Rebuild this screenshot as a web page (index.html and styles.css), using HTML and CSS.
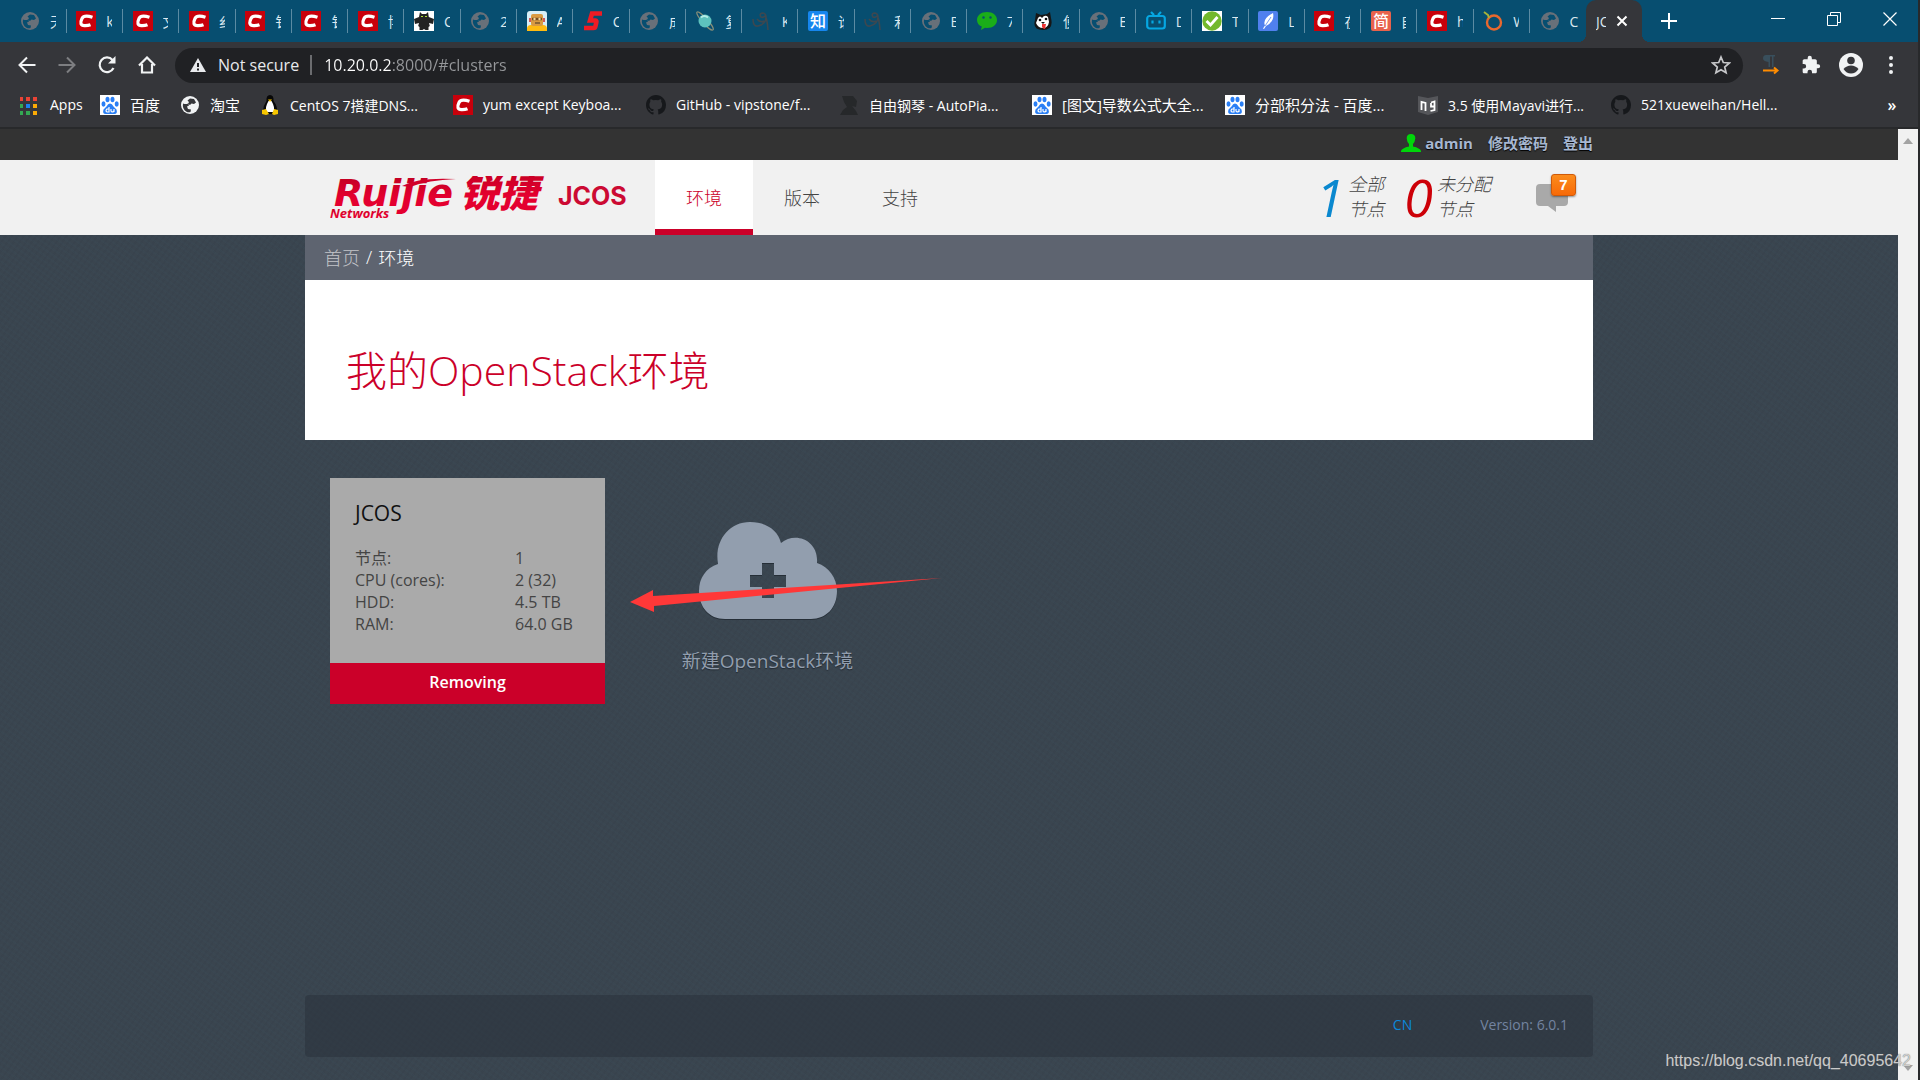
FILE: index.html
```html
<!DOCTYPE html>
<html lang="zh-CN">
<head>
<meta charset="utf-8">
<title>JCOS</title>
<link rel="stylesheet" href="styles.css">
</head>
<body>
<svg class="defs" aria-hidden="true">
  <symbol id="globe" viewBox="0 0 20 20"><circle cx="10" cy="10" r="9" fill="currentColor"/><path class="land" d="M3 8.500q3 1 5 0l1 2-2 1 1 2.500 3 .5-.5 2.500q-2 .8-4-.2-4.500-2.500-3.500-8.300zM10 3.500l4 .5 2 3.500-2 1.500-2.500-.5-1.500 1.500-2-1 1-2-1.500-1.500z"/></symbol>
  <symbol id="csdn" viewBox="0 0 20 20"><path fill="#c8000b" d="M0 0h20v20H0z"/><path d="M16.500 6.300Q8 3.500 6 7.500 2.700 14.500 8.500 14.600q3.500.1 6-.9" fill="none" stroke="#fff" stroke-width="3.200"/></symbol>
  <symbol id="dragon" viewBox="0 0 20 20"><path fill="#fff" d="M0 0h20v20H0z"/><path fill="#222" d="M6 1l2 2h4l2-2 .8 5L20 8l-1 5-4-1 .8 3-1.300 1v3h-3l-1.500-1-1.500 1h-3v-3l-1.300-1L5 12l-4 1-1-5 5-2z"/><path fill="#ad3" d="M7 5h2v1H7zM11 5h2v1h-2z"/></symbol>
  <symbol id="robot" viewBox="0 0 20 20"><rect width="20" height="20" rx="3" fill="#d8eef6"/><path fill="#fb1" d="M0 20v-2q0-4 4-4h12q4 0 4 4v2z"/><rect x="4" y="3" width="12" height="12" rx="2" fill="#d99a42"/><path d="M5 8h10" stroke="#754c22" stroke-width="2.500"/><circle cx="7.500" cy="8" r="1.200" fill="#f3d9a0"/><circle cx="12.500" cy="8" r="1.200" fill="#f3d9a0"/><path d="M3 7v4M17 7v4" stroke="#c33" stroke-width="1.600"/><path d="M8 12h5" stroke="#432"/></symbol>
  <symbol id="five" viewBox="0 0 20 20"><path d="M19 2.500H9L7 9.500h5.500q1.300 0 .8 2l-.8 3.500q-.4 2-2 2H1" fill="none" stroke="#ee1c24" stroke-width="4.600"/></symbol>
  <symbol id="planet" viewBox="0 0 20 20"><ellipse cx="10" cy="10" rx="12" ry="2.600" transform="rotate(48 10 10)" fill="none" stroke="#8a8f78" stroke-width="1.200"/><circle cx="10" cy="10" r="6.500" fill="#5ec2bd"/><path d="M6 6.500q3-3 7 0" stroke="#b5ece6" stroke-width="2" fill="none"/></symbol>
  <symbol id="scribble" viewBox="0 0 20 20"><path d="M1 8q0 8 5 7 8-2 8-9 0-4-4-4-3 1-1 4 2 1 4-1 2 1 3 14M5 8q3 4 7 2" fill="none" stroke="#3d4850" stroke-width="1.600"/></symbol>
  <symbol id="zhihu" viewBox="0 0 20 20"><rect width="20" height="20" rx="2" fill="#1686ee"/><text x="10" y="16" text-anchor="middle" class="glyph">知</text></symbol>
  <symbol id="wechat" viewBox="0 0 20 20"><path fill="#1aad19" d="M10 1c6 0 10 3.500 10 8s-4 8-10 8l-2-.2L4 19l.8-3.400Q0 13.500 0 9c0-4.500 4-8 10-8z"/><circle cx="6.500" cy="6.500" r="1.200" fill="#074e70"/><circle cx="13.500" cy="6.500" r="1.200" fill="#074e70"/></symbol>
  <symbol id="husky" viewBox="0 0 20 20"><path fill="#161616" d="M3 2l5 2 6-1 3-2 1 6q3 12-8 12T2 9z"/><path fill="#fff" d="M5 7q2-3 4 0 3-4 6-1l1 5q-1 6-6 6-5 0-7-5z"/><circle cx="7" cy="9" r="1.300" fill="#111"/><circle cx="13" cy="8" r="1.300" fill="#111"/><path fill="#111" d="M8 11h4l-2 2z"/><path fill="#e33" d="M9 13h4l-1 5q-2 0-3-2z"/></symbol>
  <symbol id="bili" viewBox="0 0 20 20"><rect x="1.200" y="5" width="17.600" height="12.500" rx="2.500" fill="none" stroke="#06a7e2" stroke-width="2.200"/><path d="M5 1l3 3M15 1l-3 3M6.500 9.500v3M13.500 9.500v3" stroke="#06a7e2" stroke-width="2.200"/></symbol>
  <symbol id="check" viewBox="0 0 20 20"><path fill="#fff" d="M0 0h20v20H0z"/><circle cx="10" cy="10" r="9.700" fill="#72b82c"/><path d="M4.500 10l4 4 7-8" fill="none" stroke="#fff" stroke-width="2.800"/></symbol>
  <symbol id="feather" viewBox="0 0 20 20"><rect width="20" height="20" rx="2" fill="#5080ee"/><path fill="#fff" d="M15 2q2 8-7 13l-2 3-1-.5 2-3Q4 8 15 2z"/><path d="M7 15l6-9" stroke="#5080ee" stroke-width=".8"/></symbol>
  <symbol id="jian" viewBox="0 0 20 20"><rect width="20" height="20" rx="2" fill="#e8624c"/><text x="10" y="16" text-anchor="middle" class="glyph">简</text></symbol>
  <symbol id="orange" viewBox="0 0 20 20"><circle cx="11" cy="11.500" r="7" fill="none" stroke="#e8682e" stroke-width="2.400"/><path d="M1 1l4 3 1 3" fill="none" stroke="#a5b33a" stroke-width="2"/></symbol>
  <symbol id="baidu" viewBox="0 0 20 20"><path fill="#fff" d="M0 0h20v20H0z"/><g fill="#2a7ff5"><ellipse cx="3.500" cy="9" rx="2" ry="2.700"/><ellipse cx="7.500" cy="4.500" rx="2" ry="2.800"/><ellipse cx="12.500" cy="4.500" rx="2" ry="2.800"/><ellipse cx="16.700" cy="9" rx="2" ry="2.700"/><path d="M10 8.500q2 0 3.500 3l3 3q1.500 5-3 4.500h-7q-4.500.5-3-4.500l3-3Q8 8.500 10 8.500z"/></g><path d="M9 12v5H7q-2-1 0-3h2M11 14v2q1 2 3 0v-2 3" fill="none" stroke="#fff" stroke-width="1.200"/></symbol>
  <symbol id="tux" viewBox="0 0 20 20"><path fill="#080808" d="M10 0q4 0 3.500 6 4 5 3.500 10l-3 3H6l-3-3q0-5 3.500-10Q6 0 10 0z"/><path fill="#fff" d="M8.500 6h3q4 7 2 11h-7q-2-4 2-11z"/><path fill="#f7c600" d="M2 15l4-1 3 5-3 1-4-1zM18 15l-4-1-2 5 2 1 4-1zM8 4.500h4L10 7z"/></symbol>
  <symbol id="github" viewBox="0 0 16 16"><path fill="#16181b" d="M8 0C3.580 0 0 3.580 0 8c0 3.540 2.290 6.530 5.470 7.590.4.070.55-.17.55-.38v-1.490c-2.010.37-2.530-.49-2.690-.94-.36-.92-1.200-1.300-1.510-1.480-.6-.5 0-.5.300-.45.750.1 1.200.900 1.400 1.150.72 1.210 1.870.87 2.330.66.070-.52.280-.87.510-1.070-1.780-.2-3.640-.89-3.640-3.950 0-.87.310-1.590.82-2.150-.08-.2-.36-1.020.08-2.120 0 0 .67-.21 2.200.82a7.600 7.600 0 0 1 4 0c1.530-1.040 2.200-.82 2.200-.82.44 1.100.16 1.920.08 2.120.51.56.82 1.270.82 2.150 0 3.070-1.870 3.750-3.650 3.950.29.250.54.730.54 1.480v2.190c0 .21.150.46.550.38A8 8 0 0 0 16 8c0-4.420-3.580-8-8-8z"/></symbol>
  <symbol id="piano" viewBox="0 0 20 20"><path fill="#26282a" d="M3 1h11l4 5-1 6-4-1 4 5 2 4H1l3-5 4-3-3-5z"/></symbol>
  <symbol id="book" viewBox="0 0 20 20"><path fill="#55565a" d="M0 1l10 2 10-2v16l-10 3L0 17z"/><path d="M3.500 15V7l4 1v8M13 8v3.500h3.500V6.500L13 7.500M16.500 11v4l-4 1" fill="none" stroke="#fff" stroke-width="1.800"/></symbol>
</svg>

<header class="browser">
  <div class="tabstrip">
    <nav class="tabs" aria-label="Tabs">
      <a class="tab" href="#"><svg class="fav dim"><use href="#globe"/></svg><span>天</span></a>
      <a class="tab" href="#"><svg class="fav"><use href="#csdn"/></svg><span>k</span></a>
      <a class="tab" href="#"><svg class="fav"><use href="#csdn"/></svg><span>文</span></a>
      <a class="tab" href="#"><svg class="fav"><use href="#csdn"/></svg><span>纟</span></a>
      <a class="tab" href="#"><svg class="fav"><use href="#csdn"/></svg><span>钅</span></a>
      <a class="tab" href="#"><svg class="fav"><use href="#csdn"/></svg><span>钅</span></a>
      <a class="tab" href="#"><svg class="fav"><use href="#csdn"/></svg><span>博</span></a>
      <a class="tab" href="#"><svg class="fav"><use href="#dragon"/></svg><span>C</span></a>
      <a class="tab" href="#"><svg class="fav dim"><use href="#globe"/></svg><span>2</span></a>
      <a class="tab" href="#"><svg class="fav"><use href="#robot"/></svg><span>A</span></a>
      <a class="tab" href="#"><svg class="fav"><use href="#five"/></svg><span>C</span></a>
      <a class="tab" href="#"><svg class="fav dim"><use href="#globe"/></svg><span>成</span></a>
      <a class="tab" href="#"><svg class="fav"><use href="#planet"/></svg><span>复</span></a>
      <a class="tab" href="#"><svg class="fav"><use href="#scribble"/></svg><span>K</span></a>
      <a class="tab" href="#"><svg class="fav"><use href="#zhihu"/></svg><span>谁</span></a>
      <a class="tab" href="#"><svg class="fav"><use href="#scribble"/></svg><span>利</span></a>
      <a class="tab" href="#"><svg class="fav dim"><use href="#globe"/></svg><span>B</span></a>
      <a class="tab" href="#"><svg class="fav"><use href="#wechat"/></svg><span>7</span></a>
      <a class="tab" href="#"><svg class="fav"><use href="#husky"/></svg><span>使</span></a>
      <a class="tab" href="#"><svg class="fav dim"><use href="#globe"/></svg><span>E</span></a>
      <a class="tab" href="#"><svg class="fav"><use href="#bili"/></svg><span>D</span></a>
      <a class="tab" href="#"><svg class="fav"><use href="#check"/></svg><span>T</span></a>
      <a class="tab" href="#"><svg class="fav"><use href="#feather"/></svg><span>L</span></a>
      <a class="tab" href="#"><svg class="fav"><use href="#csdn"/></svg><span>在</span></a>
      <a class="tab" href="#"><svg class="fav"><use href="#jian"/></svg><span>自</span></a>
      <a class="tab" href="#"><svg class="fav"><use href="#csdn"/></svg><span>h</span></a>
      <a class="tab" href="#"><svg class="fav"><use href="#orange"/></svg><span>W</span></a>
      <a class="tab last" href="#"><svg class="fav dim"><use href="#globe"/></svg><span>C</span></a>
      <a class="tab current" href="#clusters" aria-current="page"><span>JC</span><svg class="x" viewBox="0 0 12 12"><path d="M1.500 1.500l9 9M10.500 1.500l-9 9" stroke="#fff" stroke-width="2"/></svg></a>
    </nav>
    <button class="newtab" aria-label="New tab"><svg width="16" height="16" viewBox="0 0 16 16"><path d="M8 0v16M0 8h16" stroke="#fff" stroke-width="2"/></svg></button>
    <div class="window-controls">
      <button aria-label="Minimize"><svg width="14" height="14" viewBox="0 0 14 14"><path d="M0 6.500h14" stroke="#fff"/></svg></button>
      <button aria-label="Restore"><svg width="14" height="14" viewBox="0 0 14 14"><path d="M.5 3.500h10v10H.5zM3.500 3V.5h10v10H11" fill="none" stroke="#fff"/></svg></button>
      <button aria-label="Close"><svg width="14" height="14" viewBox="0 0 14 14"><path d="M.5.5l13 13M13.500.5l-13 13" stroke="#fff" stroke-width="1.200"/></svg></button>
    </div>
  </div>

  <div class="toolbar">
    <button aria-label="Back"><svg width="18" height="18" viewBox="0 0 18 18"><path d="M17.500 9H2M9 1.500L1.500 9 9 16.500" fill="none" stroke="#f1f3f4" stroke-width="2"/></svg></button>
    <button aria-label="Forward"><svg width="18" height="18" viewBox="0 0 18 18"><path d="M.5 9H16M9 1.500L16.500 9 9 16.500" fill="none" stroke="#7d7e81" stroke-width="2"/></svg></button>
    <button aria-label="Reload"><svg width="18" height="18" viewBox="0 0 18 18"><path d="M15.500 12A7.300 7.300 0 1 1 14.500 4L16 6" fill="none" stroke="#f1f3f4" stroke-width="2.200"/><path d="M17.500 0v7.500H10z" fill="#f1f3f4"/></svg></button>
    <button aria-label="Home"><svg width="18" height="18" viewBox="0 0 18 18"><path d="M1 9.500L9 1.500l8 8M4 8v8.500h10V8" fill="none" stroke="#f1f3f4" stroke-width="2.200"/></svg></button>
    <div class="omnibox">
      <svg width="16" height="14" viewBox="0 0 16 14"><path d="M8 0l8 14H0z" fill="#e8eaed"/><path d="M8 5v4M8 10.500v2" stroke="#202124" stroke-width="2"/></svg>
      <label for="address">Not secure</label>
      <input id="address" type="text" value="10.20.0.2:8000/#clusters">
      <button class="star" aria-label="Bookmark this page"><svg width="20" height="20" viewBox="0 0 20 20"><path d="M10 2l2.300 5.500 6 .5-4.600 4 1.400 5.800L10 14.700l-5.100 3.100L6.300 12 1.700 8l6-.5z" fill="none" stroke="#c6c7c9" stroke-width="1.700"/></svg></button>
    </div>
    <button aria-label="Text direction"><svg width="18" height="20" viewBox="0 0 18 20"><path d="M4 0h9v1.500h-1.500V12H10V1.500H8V12H6.500V7Q1 6 1 3.500 1 0 4 0z" fill="#394f5c"/><path d="M1 15.500h14M12 12.500l3.500 3-3.500 3" fill="none" stroke="#ff8c00" stroke-width="2"/></svg></button>
    <button aria-label="Extensions"><svg width="20" height="20" viewBox="0 0 24 24"><path fill="#f1f3f4" d="M20.500 11H19V7c0-1.100-.9-2-2-2h-4V3.500a2.500 2.500 0 0 0-5 0V5H4c-1.100 0-2 .9-2 2v3.800h1.500a2.700 2.700 0 0 1 0 5.400H2V20c0 1.100.9 2 2 2h3.800v-1.500a2.700 2.700 0 0 1 5.400 0V22H17c1.100 0 2-.9 2-2v-4h1.500a2.500 2.500 0 0 0 0-5z"/></svg></button>
    <button aria-label="Profile"><svg width="24" height="24" viewBox="0 0 24 24"><circle cx="12" cy="12" r="12" fill="#f1f3f4"/><circle cx="12" cy="7.500" r="3.800" fill="#35363a"/><path d="M4.500 16q3-3.500 7.500-3.500t7.500 3.500q-3 4.500-7.500 4.500T4.500 16z" fill="#35363a"/></svg></button>
    <button aria-label="Menu"><svg width="6" height="18" viewBox="0 0 6 18"><path fill="#f1f3f4" d="M3 0a2 2 0 1 1 0 4 2 2 0 0 1 0-4zm0 7a2 2 0 1 1 0 4 2 2 0 0 1 0-4zm0 7a2 2 0 1 1 0 4 2 2 0 0 1 0-4z"/></svg></button>
  </div>

  <nav class="bookmarks" aria-label="Bookmarks">
    <a class="mark short" href="#"><svg class="fav apps" viewBox="1 0 20 20"><path fill="#ea4335" d="M0 2h4v4H0zM7 2h4v4H7zM14 2h4v4h-4z"/><path fill="#34a853" d="M0 9h4v4H0zM0 16h4v4H0zM7 16h4v4H7z"/><path fill="#1a82f0" d="M7 9h4v4H7z"/><path fill="#fbaa05" d="M14 9h4v4h-4zM14 16h4v4h-4z"/></svg>Apps</a>
    <a class="mark short cjk" href="#"><svg class="fav"><use href="#baidu"/></svg>百度</a>
    <a class="mark short cjk" href="#"><svg class="fav bright"><use href="#globe"/></svg>淘宝</a>
    <a class="mark" href="#"><svg class="fav"><use href="#tux"/></svg>CentOS 7搭建DNS...</a>
    <a class="mark" href="#"><svg class="fav"><use href="#csdn"/></svg>yum except Keyboa...</a>
    <a class="mark" href="#"><svg class="fav"><use href="#github"/></svg>GitHub - vipstone/f...</a>
    <a class="mark" href="#"><svg class="fav"><use href="#piano"/></svg>自由钢琴 - AutoPia...</a>
    <a class="mark cjk" href="#"><svg class="fav"><use href="#baidu"/></svg>[图文]导数公式大全...</a>
    <a class="mark cjk" href="#"><svg class="fav"><use href="#baidu"/></svg>分部积分法 - 百度...</a>
    <a class="mark" href="#"><svg class="fav"><use href="#book"/></svg>3.5 使用Mayavi进行...</a>
    <a class="mark" href="#"><svg class="fav"><use href="#github"/></svg>521xueweihan/Hell...</a>
    <button class="more" aria-label="More bookmarks">»</button>
  </nav>
</header>

<div class="viewport">
  <div class="page">
    <div class="userbar">
      <div class="container user-links">
        <svg width="20" height="19" viewBox="0 0 20 19"><path d="M10 0q4.500 0 4.300 4.500Q14 8 12 10v2.500q7 1.500 8 4.500v1H0v-1q1-3 8-4.500V10Q6 8 5.700 4.500 5.500 0 10 0z" fill="#00d60a"/></svg>
        <span class="username">admin</span>
        <a href="#password">修改密码</a>
        <a href="#logout">登出</a>
      </div>
    </div>

    <div class="navbar">
      <div class="container navbar-row">
        <a class="logo" href="#" aria-label="Ruijie Networks JCOS">
          <svg width="310" height="46" viewBox="0 0 310 46">
            <defs><linearGradient id="brand" x1="0" x2="0" y1="0" y2="1"><stop offset="0" stop-color="#b8001f"/><stop offset=".6" stop-color="#e4002f"/></linearGradient></defs>
            <text class="logo-name" x="4" y="30">Ruijie</text>
            <path d="M72 10Q88 1 126 3 98 4 80 11z" fill="#d10029"/>
            <text class="logo-sub" x="0" y="42">Networks</text>
            <text class="logo-cn" x="130" y="31">锐捷</text>
            <text class="logo-product" x="228" y="29">JCOS</text>
          </svg>
        </a>
        <nav class="menu">
          <a class="active" href="#clusters">环境</a>
          <a href="#releases">版本</a>
          <a href="#support">支持</a>
        </nav>
        <div class="stats">
          <div class="stat"><span class="count total">1</span><span class="stat-label">全部<br>节点</span></div>
          <div class="stat"><span class="count free">0</span><span class="stat-label">未分配<br>节点</span></div>
        </div>
        <button class="notifications" aria-label="Notifications">
          <svg width="32" height="28" viewBox="0 0 32 28"><path d="M4 0h24q4 0 4 4v14q0 4-4 4h-8v6l-8-6H4q-4 0-4-4V4q0-4 4-4z" fill="#a9a9a9"/></svg>
          <span class="badge">7</span>
        </button>
      </div>
    </div>

    <main class="container main">
      <nav class="breadcrumb"><a href="#">首页</a><span>/</span><span>环境</span></nav>
      <div class="title-box"><h1>我的OpenStack环境</h1></div>
      <div class="clusters">
        <article class="cluster">
          <div class="cluster-body">
            <h2>JCOS</h2>
            <table>
              <tr><th scope="row">节点:</th><td>1</td></tr>
              <tr><th scope="row">CPU (cores):</th><td>2 (32)</td></tr>
              <tr><th scope="row">HDD:</th><td>4.5 TB</td></tr>
              <tr><th scope="row">RAM:</th><td>64.0 GB</td></tr>
            </table>
          </div>
          <div class="cluster-status">Removing</div>
        </article>
        <div class="create">
          <button class="create-button">
            <svg width="138" height="98" viewBox="0 0 138 98"><path fill="#929eae" fill-rule="evenodd" d="M19 42C15 20 29 0 51 0c16 0 28 8 31 21 14-12 38-3 36 20 12 4 20 15 20 28 0 17-11 28-26 28H26C10 97 0 85 0 69 0 56 7 46 19 42zM63 41v12H51v12h12v11h12V65h12V53H75V41z"/></svg>
            <span>新建OpenStack环境</span>
          </button>
          <svg class="pointer" width="312" height="36" viewBox="0 0 312 36" aria-hidden="true"><path d="M0 24L23 12v6L312 0 24 28v6z" fill="#ff3838"/></svg>
        </div>
      </div>
    </main>

    <footer class="container footer">
      <a href="#language">CN</a>
      <span>Version: 6.0.1</span>
    </footer>
  </div>
  <div class="scrollbar" aria-hidden="true">
    <svg width="10" height="6" viewBox="0 0 10 6"><path d="M5 0l5 6H0z" fill="#a3a3a3"/></svg>
    <svg width="10" height="6" viewBox="0 0 10 6"><path d="M0 0h10L5 6z" fill="#a3a3a3"/></svg>
  </div>
</div>
<div class="watermark">https://blog.csdn.net/qq_40695642</div>
</body>
</html>
```
FILE: styles.css
```css
* { box-sizing: border-box; }

body {
  margin: 0;
  min-height: 100vh;
  display: flex;
  flex-direction: column;
  position: relative;
  border-right: 2px solid #28292b;
  background: #3a454f;
  color: #fff;
  font-family: "Open Sans", "Noto Sans CJK SC", sans-serif;
  font-size: 16px;
}

a { color: inherit; text-decoration: none; }

button {
  display: flex;
  align-items: center;
  justify-content: center;
  margin: 0;
  padding: 0;
  border: 0;
  background: none;
  color: inherit;
  font: inherit;
}

.defs { display: none; }
.glyph { font: 500 16px "Noto Sans CJK SC", sans-serif; fill: #fff; }

/* Browser frame */
.tabstrip {
  display: flex;
  height: 42px;
  padding-left: 10px;
  background: #074e70;
}
.tabs { display: flex; flex: 1; min-width: 0; }
.tab {
  display: flex;
  flex: 1 1 0;
  align-items: center;
  gap: 10px;
  min-width: 0;
  padding-left: 10px;
  position: relative;
  font-size: 14px;
}
.tab span { width: 10px; overflow: hidden; white-space: nowrap; color: #dbe8ef; }
.tab::after {
  content: "";
  width: 1px;
  height: 24px;
  margin-left: auto;
  background: #5b8ba3;
}
.tab.last::after { display: none; }
.tab.current { background: #35363a; border-radius: 10px 10px 0 0; }
.tab.current::before, .tab.current::after {
  content: "";
  position: absolute;
  bottom: 0;
  width: 8px;
  height: 8px;
}
.tab.current::before { right: 100%; background: radial-gradient(circle at 0 0, transparent 8px, #35363a 8px); }
.tab.current::after { left: 100%; margin: 0; background: radial-gradient(circle at 100% 0, transparent 8px, #35363a 8px); }
.fav { flex: none; width: 20px; height: 20px; }
.dim { color: #687079; --land: #074e70; }
.bright { color: #f1f3f4; --land: #35363a; }
.land { fill: var(--land); }
.x { width: 12px; height: 12px; flex: none; }
.newtab { width: 54px; margin-right: 54px; }
.window-controls { display: flex; height: 38px; }
.window-controls button { width: 56px; }

.toolbar {
  display: flex;
  align-items: center;
  height: 46px;
  padding: 0 7px;
  background: #35363a;
}
.toolbar > button { width: 40px; height: 36px; }
.omnibox {
  display: flex;
  flex: 1;
  align-items: center;
  height: 35px;
  margin: 0 8px;
  padding: 0 12px 0 15px;
  border-radius: 18px;
  background: #202124;
}
.omnibox label {
  margin-left: 12px;
  padding-right: 11px;
  border-right: 2px solid #6b6c6f;
  line-height: 20px;
  color: #e8eaed;
}
.omnibox input {
  flex: 1;
  min-width: 0;
  margin: 0 0 0 12px;
  padding: 0;
  border: 0;
  background: linear-gradient(90deg, #fff 69px, #96989b 69px);
  -webkit-background-clip: text;
  background-clip: text;
  color: transparent;
  font: inherit;
}

.bookmarks {
  display: flex;
  align-items: center;
  height: 41px;
  padding: 0 6px 6px 20px;
  border-bottom: 2px solid #28292b;
  background: #35363a;
  font-size: 14px;
}
.mark {
  display: flex;
  flex: none;
  align-items: center;
  gap: 10px;
  width: 193px;
  white-space: nowrap;
}
.mark.short { width: 80px; }
.mark.cjk { font-size: 15px; }
.more { width: 40px; margin-left: auto; font-weight: 600; font-size: 16px; }

/* Page */
.viewport { display: flex; flex: 1; }
.page {
  display: flex;
  flex: 1;
  flex-direction: column;
  min-width: 0;
  background:
    repeating-linear-gradient(35deg, rgba(60, 85, 100, .1) 0 2px, transparent 2px 5px),
    repeating-linear-gradient(125deg, rgba(20, 20, 40, .04) 0 2px, transparent 2px 5px),
    #3a454f;
}
.container { width: 68%; max-width: 1288px; min-width: 1100px; margin: 0 auto; }

.userbar { background: #333; }
.user-links {
  display: flex;
  align-items: center;
  justify-content: flex-end;
  height: 31px;
  padding-bottom: 3px;
  color: #a7b7d1;
  font-size: 15px;
  font-weight: 700;
  line-height: 20px;
  text-shadow: 0 1px 1px #000;
}
.username { margin-left: 4px; }
.user-links a { margin-left: 15px; }

.navbar { background: #f1f1f1; }
.navbar-row { display: flex; height: 75px; }
.logo { width: 350px; padding: 16px 0 0 25px; }
.logo svg { display: block; }
.logo text { fill: url(#brand); }
.logo-name { font: italic 700 38px "DejaVu Sans", sans-serif; }
.logo-sub { font: italic 700 13px "Open Sans", sans-serif; }
.logo-cn { font: italic 900 39px "Noto Sans CJK SC", sans-serif; }
.logo .logo-product { font: 700 25px "Inter", sans-serif; fill: #cc0a33; }

.menu { display: flex; font-size: 18px; font-weight: 300; }
.menu a {
  display: flex;
  align-items: center;
  padding: 4px 31px 0;
  border-bottom: 6px solid transparent;
  color: #444;
}
.menu a.active { background: #fff; border-color: #cb0029; color: #cb0029; }

.stats { display: flex; align-items: center; gap: 20px; margin-left: auto; padding-bottom: 2px; }
.stat { display: flex; align-items: center; gap: 4px; font-style: italic; }
.count { font-size: 52px; line-height: 60px; }
.total { color: #0a88cf; }
.free { color: #cd0008; }
.stat-label { color: #444; font-size: 18px; font-weight: 300; line-height: 25px; }

.notifications { position: relative; align-self: center; width: 40px; margin: 0 17px 0 45px; justify-content: flex-start; }
.badge {
  position: absolute;
  right: 0;
  top: -10px;
  width: 25px;
  height: 22px;
  border: 1px solid #d05a08;
  border-radius: 3px;
  background: linear-gradient(#fb8c1c, #f86a08);
  box-shadow: 0 1px 2px rgba(0, 0, 0, .4);
  font: 700 15px/20px "Liberation Sans", sans-serif;
  text-align: center;
}

.main { display: flex; flex: 1; flex-direction: column; }
.breadcrumb {
  display: flex;
  align-items: center;
  gap: 6px;
  height: 45px;
  padding: 0 19px 2px;
  background: #5e6470;
  font-size: 18px;
  font-weight: 300;
}
.breadcrumb a { color: #c3c5c9; }
.title-box { height: 160px; padding: 60px 41px 0; background: #fff; }
h1 {
  margin: 0;
  color: #cb0029;
  font-size: 41px;
  font-weight: 300;
  line-height: 60px;
}

.clusters { display: flex; gap: 25px; padding: 38px 25px; }
.cluster { width: 275px; color: #444; }
.cluster-body { height: 185px; padding: 21px 25px; background: #aaa; }
.cluster h2 { margin: 0 0 20px; color: #111; font-size: 21px; font-weight: 400; line-height: 28px; }
.cluster table { width: 100%; border-collapse: collapse; font-size: 16px; line-height: 22px; }
.cluster th { width: 160px; padding: 0; font-weight: 400; text-align: left; white-space: nowrap; }
.cluster td { padding: 0; white-space: nowrap; }
.cluster-status {
  padding-bottom: 2px;
  background: #cb0029;
  color: #fff;
  font-size: 16px;
  font-weight: 600;
  line-height: 39px;
  text-align: center;
}

.create { position: relative; width: 275px; padding-top: 44px; }
.create-button { flex-direction: column; gap: 27px; width: 100%; color: #929eae; font-size: 19px; line-height: 28px; text-shadow: 0 1px 1px #222a32; }
.create-button svg { filter: drop-shadow(0 1px 0 #252e37); }
.pointer { position: absolute; left: 0; top: 100px; }

.footer {
  display: flex;
  align-items: center;
  justify-content: flex-end;
  gap: 68px;
  height: 62px;
  margin-bottom: 23px;
  padding: 0 25px 4px;
  border-radius: 4px;
  background: rgba(40, 48, 58, .5);
  color: #7384a0;
  font-size: 14px;
}
.footer a { color: #0a88db; }

.scrollbar {
  display: flex;
  flex: none;
  flex-direction: column;
  align-items: center;
  justify-content: space-between;
  width: 20px;
  padding: 9px 0;
  background: #f1f1f1;
}
.watermark {
  position: absolute;
  right: 7px;
  bottom: 8px;
  color: rgba(225, 225, 225, .85);
  font: 16px/22px "Liberation Sans", sans-serif;
  text-shadow: 0 0 1px #555;
}
```
